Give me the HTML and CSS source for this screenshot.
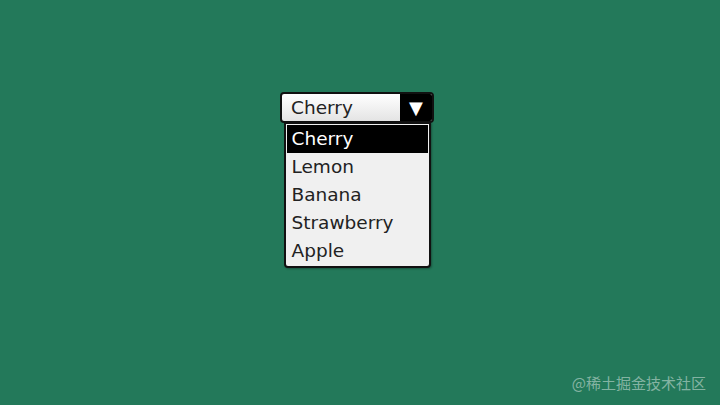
FILE: index.html
```html
<!DOCTYPE html>
<html lang="en">
  <head>
    <meta charset="UTF-8" />
    <title>Custom Select</title>
    <link rel="stylesheet" href="styles.css">
  </head>
  <body>
    <div class="stage">
      <div class="select">
        <div class="select-box">
          <span class="select-value">Cherry</span>
          <span class="select-arrow">&#9660;</span>
        </div>
        <!-- Options list -->
        <ul class="options">
          <li class="selected">Cherry</li>
          <li>Lemon</li>
          <li>Banana</li>
          <li>Strawberry</li>
          <li>Apple</li>
        </ul>
      </div>
    </div>
    <div class="watermark">@稀土掘金技术社区</div>
  </body>
</html>
```
FILE: styles.css
```css
body {
  margin: 0;
  height: 405px;
  background-color: #23795a;
  font-family: "DejaVu Sans", Verdana, sans-serif;
  position: relative;
  overflow: hidden;
}

.stage {
  padding-top: 92px;
  padding-left: 280px;
}

.select {
  width: 154px;
  display: flex;
  flex-direction: column;
  align-items: center;
}

.select-box {
  width: 150px;
  height: 27px;
  display: flex;
  align-items: stretch;
  border: 2px solid #111;
  border-radius: 4px;
  background: linear-gradient(#ffffff, #e4e4e4);
  overflow: hidden;
}

.select-value {
  flex: 1;
  padding-left: 9px;
  font-size: 18.5px;
  line-height: 27px;
  color: #222;
}

.select-arrow {
  width: 32px;
  background-color: #000;
  color: #fff;
  font-size: 18px;
  line-height: 27px;
  text-align: center;
}

.options {
  list-style: none;
  margin: -1px 0 0;
  padding: 1px 1px 1px;
  width: 141px;
  background-color: #f0f0f0;
  border: 2px solid #111;
  border-radius: 0 0 4px 4px;
  box-shadow: 1px 1px 2px rgba(0, 0, 0, 0.3);
}

.options li {
  height: 28px;
  line-height: 28px;
  padding-left: 5px;
  font-size: 18.5px;
  color: #222;
}

.options li.selected {
  background-color: #000;
  color: #fff;
}

.watermark {
  position: absolute;
  right: 14px;
  bottom: 12px;
  font-family: "Noto Sans CJK SC", sans-serif;
  font-size: 15px;
  color: rgba(255, 255, 255, 0.45);
}
```
